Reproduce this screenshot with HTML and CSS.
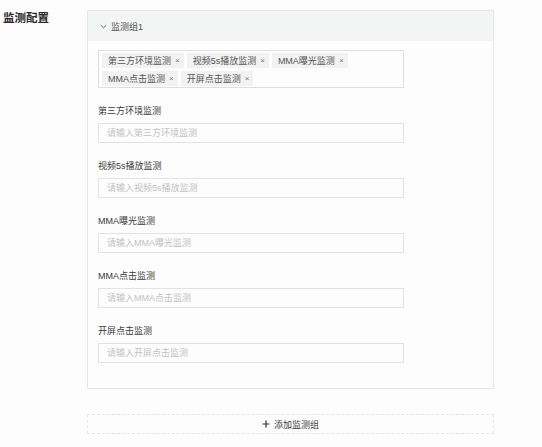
FILE: index.html
```html
<!DOCTYPE html>
<html lang="zh">
<head>
<meta charset="utf-8">
<link rel="stylesheet" href="styles.css">
</head>
<body>
<div class="page">
  <div class="label-col">监测配置</div>
  <div class="content">
    <div class="panel">
      <div class="panel-head">
        <svg class="chev" width="7" height="5" viewBox="0 0 7 5"><path d="M0.8 1.2 L3.5 3.8 L6.2 1.2" fill="none" stroke="#666" stroke-width="1"/></svg>
        <span>监测组1</span>
      </div>
      <div class="panel-body">
        <div class="tag-box">
          <span class="tag">第三方环境监测<i class="x">×</i></span>
          <span class="tag">视频5s播放监测<i class="x">×</i></span>
          <span class="tag">MMA曝光监测<i class="x">×</i></span>
          <span class="tag">MMA点击监测<i class="x">×</i></span>
          <span class="tag">开屏点击监测<i class="x">×</i></span>
        </div>
        <div class="item"><div class="lab">第三方环境监测</div><input class="inp" placeholder="请输入第三方环境监测"></div>
        <div class="item"><div class="lab">视频5s播放监测</div><input class="inp" placeholder="请输入视频5s播放监测"></div>
        <div class="item"><div class="lab">MMA曝光监测</div><input class="inp" placeholder="请输入MMA曝光监测"></div>
        <div class="item"><div class="lab">MMA点击监测</div><input class="inp" placeholder="请输入MMA点击监测"></div>
        <div class="item"><div class="lab">开屏点击监测</div><input class="inp" placeholder="请输入开屏点击监测"></div>
      </div>
    </div>
    <div class="add">
      <svg class="plus" width="8" height="8" viewBox="0 0 8 8"><path d="M4 0.5 V7.5 M0.5 4 H7.5" stroke="#333" stroke-width="1.2"/></svg>
      <span>添加监测组</span>
    </div>
  </div>
</div>
</body>
</html>
```

FILE: styles.css
```css
html, body {
  margin: 0;
  padding: 0;
  background: #fdfdfd;
}
body {
  font-family: "Liberation Sans", "Noto Sans CJK SC", sans-serif;
  color: #333;
}
.page {
  display: flex;
  padding-top: 10px;
}
.label-col {
  width: 87px;
  box-sizing: border-box;
  padding-left: 3px;
  font-size: 11.5px;
  font-weight: bold;
  line-height: 16px;
  color: #2a2a2a;
}
.content {
  width: 407px;
}
.panel {
  border: 1px solid #e6e7e7;
  background: #fdfdfd;
}
.panel-head {
  height: 30px;
  background: #f3f4f4;
  display: flex;
  align-items: center;
  padding-left: 12px;
  font-size: 9px;
  color: #555;
}
.chev {
  margin-right: 4px;
}
.panel-body {
  padding: 9px 10px 25px 10px;
}
.tag-box {
  width: 306px;
  box-sizing: border-box;
  border: 1px solid #dedede;
  padding: 2px 3px 1px 3px;
  display: flex;
  flex-wrap: wrap;
  gap: 3px 3px;
  margin-bottom: 17px;
}
.tag {
  display: inline-flex;
  align-items: center;
  height: 15px;
  background: #f2f2f2;
  padding: 0 4px 0 6px;
  font-size: 9px;
  color: #555;
}
.x {
  font-style: normal;
  font-size: 8px;
  color: #777;
  margin-left: 4px;
}
.item {
  margin-bottom: 17px;
}
.item:last-child {
  margin-bottom: 0;
}
.lab {
  font-size: 9px;
  line-height: 12px;
  color: #3a3a3a;
  margin-bottom: 6px;
}
.inp {
  display: block;
  width: 306px;
  height: 20px;
  box-sizing: border-box;
  border: 1px solid #e2e2e2;
  background: #fdfdfd;
  padding: 0 0 0 8px;
  margin: 0;
  font-family: "Liberation Sans", "Noto Sans CJK SC", sans-serif;
  font-size: 9px;
  outline: none;
}
.inp::placeholder {
  color: #c2c2c2;
}
.add {
  margin-top: 25px;
  height: 20px;
  box-sizing: border-box;
  border: 1px dashed #e3e3e3;
  display: flex;
  align-items: center;
  justify-content: center;
  font-size: 9px;
  color: #3a3a3a;
}
.plus {
  margin-right: 4px;
}
```
